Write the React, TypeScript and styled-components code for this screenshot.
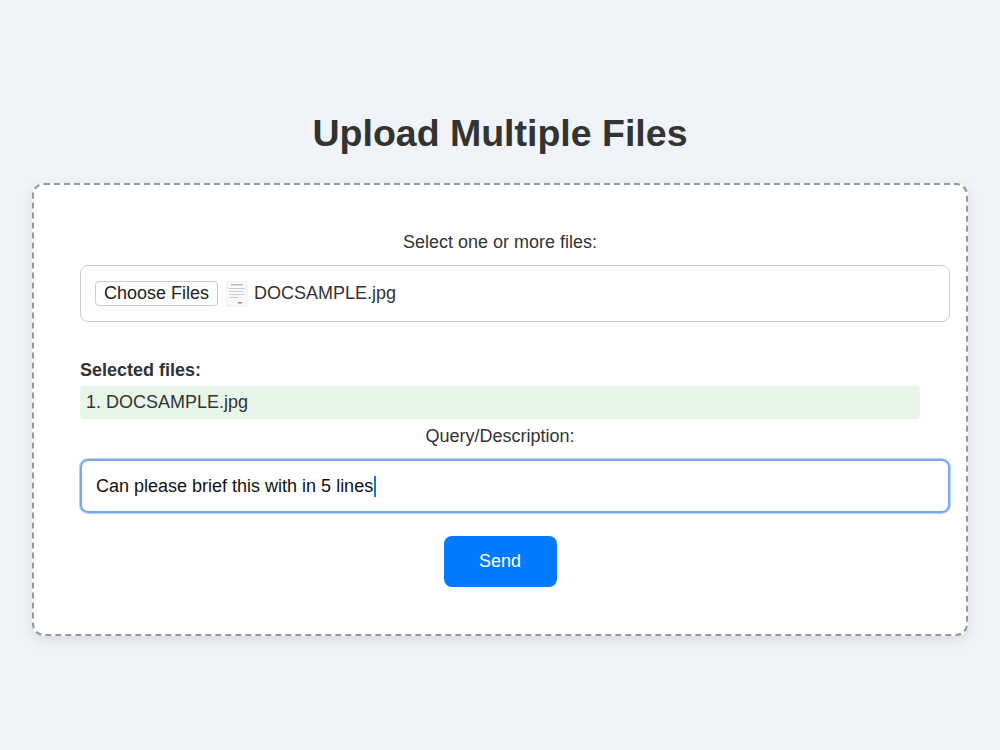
import React from "react";
import styled, { createGlobalStyle } from "styled-components";

const Global = createGlobalStyle`
  html, body { margin: 0; padding: 0; background: #f0f4f8; }
  body { font-family: "Liberation Sans", Arial, sans-serif; color: #333; }
`;

const Page = styled.div`
  width: 1000px; height: 750px; box-sizing: border-box;
  padding: 111px 32px 0;
  display: flex; flex-direction: column; align-items: stretch;
`;
const Title = styled.h1`
  margin: 0 0 28px; text-align: center; font-size: 37.5px; font-weight: 700; color: #333; line-height: 44px;
`;
const Card = styled.div`
  background: #fff; border: 2px dashed #999; border-radius: 12px;
  box-shadow: 0 4px 12px rgba(0,0,0,0.1);
  padding: 47px 46px 47px 46px;
  display: flex; flex-direction: column;
`;
const Label = styled.div`
  text-align: center; font-size: 18px; line-height: 20px; color: #333; margin-bottom: 13px;
`;
const FileBox = styled.div`
  height: 57px; box-sizing: border-box; border: 1px solid #ccc; border-radius: 8px; margin-right: -30px;
  display: flex; align-items: center; padding: 0 14px; gap: 6px; font-size: 18px;
`;
const ChooseBtn = styled.button`
  font: inherit; font-size: 18px; color: #222; background: #fff; border: 1px solid #ccc;
  border-radius: 4px; padding: 1px 8px; height: 25px; margin-right: 2px;
`;
const Thumb = styled.svg` width: 22px; height: 26px; `;
const SelTitle = styled.div`
  margin-top: 37px; font-weight: 700; font-size: 18px; line-height: 22px;
`;
const ListItem = styled.div`
  margin-top: 5px; background: #e8f5e9; border-radius: 4px;
  height: 33px; display: flex; align-items: center; padding-left: 6px; font-size: 18px;
`;
const QueryLabel = styled(Label)` margin-top: 7px; margin-bottom: 13px; `;
const TextInput = styled.div`
  height: 54px; box-sizing: border-box; border: 2px solid #7aa7f0; border-radius: 8px; margin-right: -30px;
  box-shadow: 0 0 0 1px #b7d0f8; display: flex; align-items: center; padding: 0 14px; font-size: 18px; color: #111;
`;
const Caret = styled.span` display: inline-block; width: 2px; height: 21px; background: #1a73e8; margin-left: 1px; `;
const SendRow = styled.div` display: flex; justify-content: center; margin-top: 23px; `;
const Send = styled.button`
  width: 113px; height: 51px; border: none; border-radius: 8px; background: #007bff; color: #fff;
  font-family: inherit; font-size: 18px;
`;

export default function App() {
  return (
    <>
      <Global />
      <Page>
        <Title>Upload Multiple Files</Title>
        <Card>
          <Label>Select one or more files:</Label>
          <FileBox>
            <ChooseBtn>Choose Files</ChooseBtn>
            <Thumb viewBox="0 0 22 26">
              <rect x="1" y="1" width="20" height="24" fill="#fafafa" stroke="#eee" />
              <rect x="5" y="3" width="12" height="1.5" fill="#bbb" />
              <rect x="3" y="7" width="16" height="1" fill="#ccc" />
              <rect x="3" y="10" width="14" height="1" fill="#ccc" />
              <rect x="3" y="13" width="16" height="1" fill="#ccc" />
              <rect x="3" y="16" width="10" height="1" fill="#ccc" />
              <rect x="12" y="21" width="4" height="1.5" fill="#e66" />
            </Thumb>
            <span>DOCSAMPLE.jpg</span>
          </FileBox>
          <SelTitle>Selected files:</SelTitle>
          <ListItem>1. DOCSAMPLE.jpg</ListItem>
          <QueryLabel>Query/Description:</QueryLabel>
          <TextInput>Can please brief this with in 5 lines<Caret /></TextInput>
          <SendRow><Send>Send</Send></SendRow>
        </Card>
      </Page>
    </>
  );
}
